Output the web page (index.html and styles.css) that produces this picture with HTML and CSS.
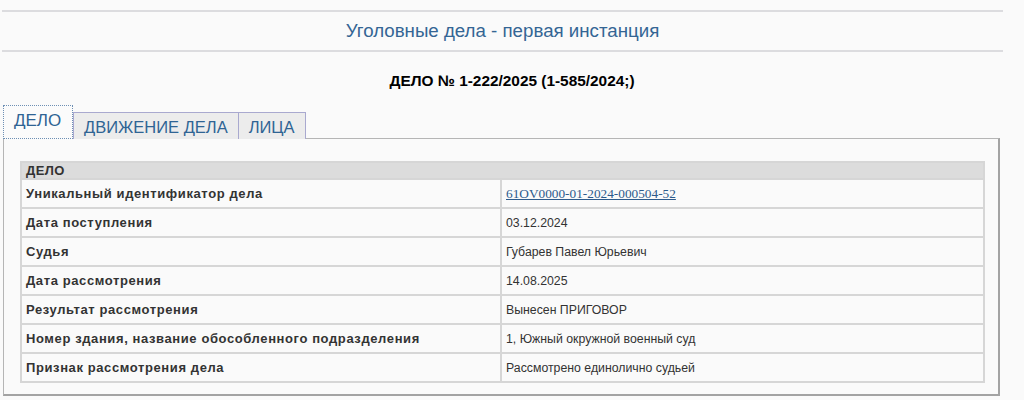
FILE: index.html
```html
<!DOCTYPE html>
<html lang="ru">
<head>
<meta charset="utf-8">
<link rel="stylesheet" href="styles.css">
</head>
<body>
<div class="page">
  <div class="title-bar">Уголовные дела - первая инстанция</div>
  <h2 class="case-no">ДЕЛО № 1-222/2025 (1-585/2024;)</h2>
  <div class="tabs">
    <div class="tab active">ДЕЛО</div>
    <div class="tab">ДВИЖЕНИЕ ДЕЛА</div>
    <div class="tab">ЛИЦА</div>
  </div>
  <div class="panel">
    <table class="info">
      <tr class="head"><td colspan="2">ДЕЛО</td></tr>
      <tr><td class="label">Уникальный идентификатор дела</td><td class="value"><a class="uid" href="#">61OV0000-01-2024-000504-52</a></td></tr>
      <tr><td class="label">Дата поступления</td><td class="value">03.12.2024</td></tr>
      <tr><td class="label">Судья</td><td class="value">Губарев Павел Юрьевич</td></tr>
      <tr><td class="label">Дата рассмотрения</td><td class="value">14.08.2025</td></tr>
      <tr><td class="label">Результат рассмотрения</td><td class="value">Вынесен ПРИГОВОР</td></tr>
      <tr><td class="label">Номер здания, название обособленного подразделения</td><td class="value">1, Южный окружной военный суд</td></tr>
      <tr><td class="label">Признак рассмотрения дела</td><td class="value">Рассмотрено единолично судьей</td></tr>
    </table>
  </div>
</div>
</body>
</html>
```
FILE: styles.css
```css
html, body {
  margin: 0;
  padding: 0;
  background: #fafafa;
  font-family: "Liberation Sans", Arial, sans-serif;
  color: #333;
}
.page {
  padding-top: 10px;
}
.title-bar {
  margin-left: 2px;
  width: 1001px;
  height: 38px;
  border-top: 2px solid #dcdcdf;
  border-bottom: 2px solid #dcdcdf;
  text-align: center;
  font-size: 18.7px;
  line-height: 38px;
  color: #346594;
}
.case-no {
  margin: 19px 0 0;
  text-align: center;
  font-size: 15.4px;
  line-height: 20px;
  font-weight: bold;
  color: #000;
  padding-left: 0;
}
.tabs {
  display: flex;
  align-items: flex-end;
  margin: 14px 0 0 3px;
  height: 34px;
}
.tab {
  box-sizing: border-box;
  height: 27px;
  padding: 0 10px;
  border: 1px solid #a9a9cf;
  border-bottom: none;
  border-left: none;
  background: #ececec;
  color: #2f6494;
  font-size: 16.5px;
  line-height: 28px;
}
.tab.active {
  height: 34px;
  width: 70px;
  border: 1px dotted #6d8fb4;
  background: #fbfbfb;
  font-size: 17px;
  line-height: 30px;
  padding: 0 10px;
}
.tab.active + .tab {
  border-left: 1px solid #a9a9cf;
}
.panel {
  margin-left: 3px;
  width: 997px;
  height: 258px;
  border: 1px solid #b5b5b5;
  border-right: 2px solid #a3a3a3;
  border-bottom: 2px solid #a3a3a3;
  padding: 22px 16px 0;
  box-sizing: border-box;
  margin-top: -1px;
}
.info {
  width: 965px;
  border-collapse: collapse;
  font-size: 12.3px;
}
.info td {
  border: 2px solid #d6d6d6;
  padding: 0 4px;
  height: 27px;
}
.info .head td {
  background: #dcdcdc;
  font-weight: bold;
  font-size: 13px;
  letter-spacing: 0.4px;
  height: 15px;
  line-height: 15px;
}
.info .label {
  width: 470px;
  font-weight: bold;
  font-size: 13px;
  letter-spacing: 0.6px;
  color: #333;
}
.info .value {
  color: #333;
}
.uid {
  font-family: "Liberation Serif", "Times New Roman", serif;
  font-size: 13.3px;
  color: #2d5b8c;
}
```
